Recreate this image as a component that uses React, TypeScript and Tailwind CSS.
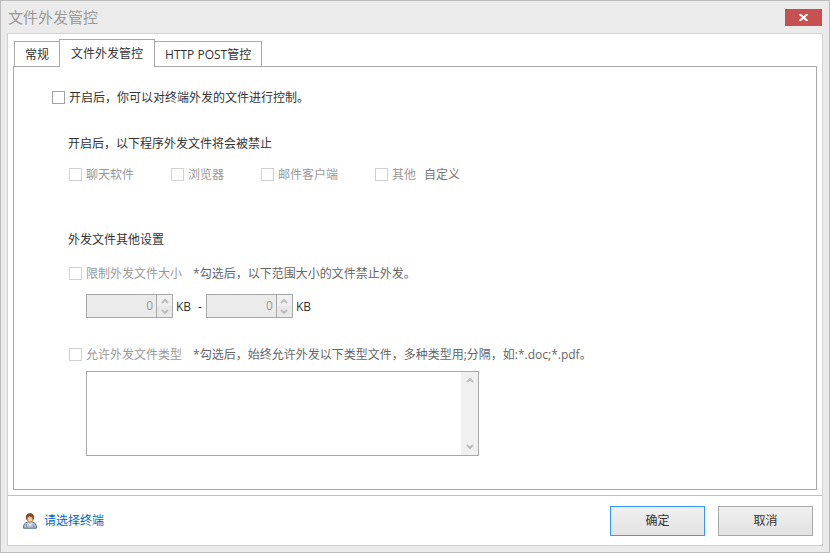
import { useState } from 'react'
import type { ReactNode } from 'react'

const tabs = ['常规', '文件外发管控', 'HTTP POST管控']
const programs = ['聊天软件', '浏览器', '邮件客户端']

function Arrow({ down = false }: { down?: boolean }) {
  return (
    <svg width="8" height="6" viewBox="0 0 8 6" fill="none" stroke="#bdbdbd" strokeWidth="2">
      <path d={down ? 'M1 1L4 4L7 1' : 'M1 5L4 2L7 5'} />
    </svg>
  )
}

function Check({ children, disabled = false }: { children: ReactNode; disabled?: boolean }) {
  return (
    <label className={`flex items-center gap-1 ${disabled ? 'text-[#999999]' : 'text-[#333333]'}`}>
      <input
        type="checkbox"
        disabled={disabled}
        className="size-[13px] shrink-0 appearance-none border border-[#a3a3a3] bg-white checked:bg-[#3399ff] disabled:border-[#d2d2d2]"
      />
      <span className="pt-px">{children}</span>
    </label>
  )
}

function SizeBox({ label }: { label: string }) {
  return (
    <div className="flex h-6 w-[87px] border border-[#a9a9a9] bg-[#ebebeb]">
      <input
        type="text"
        aria-label={label}
        defaultValue="0"
        disabled
        className="min-w-0 flex-1 bg-transparent pr-[3px] text-right text-[#999999]"
      />
      <div className="flex w-4 flex-col border-l border-[#a9a9a9]">
        <button type="button" disabled aria-label="增加" className="flex flex-1 items-center justify-center bg-[#f0f0f0]">
          <Arrow />
        </button>
        <button type="button" disabled aria-label="减少" className="flex flex-1 items-center justify-center bg-[#e8e8e8]">
          <Arrow down />
        </button>
      </div>
    </div>
  )
}

function UserIcon() {
  return (
    <svg width="14" height="16" viewBox="0 0 14 16">
      <path d="M0.6 15.2C0.3 11.6 1.5 9.8 4.4 9.2L9.6 9.2C12.5 9.8 13.7 11.6 13.4 15.2Z" fill="#b3c4d8" stroke="#566a84" strokeWidth="1" />
      <path d="M3.4 11.5V14.7M10.6 11.5V14.7" stroke="#7d92ad" strokeWidth="1" />
      <path d="M4.6 9.2L7 13.4L9.4 9.2Z" fill="#eef4fa" />
      <path d="M5.3 7.5H8.7V9.4L7 11L5.3 9.4Z" fill="#d9a06c" />
      <ellipse cx="7" cy="5.4" rx="3.2" ry="3.9" fill="#f3c79b" stroke="#8a5a35" strokeWidth="0.5" />
      <path d="M3.7 6.6C2.4 3 3.8 0.6 7 0.6C10.2 0.6 11.6 3 10.3 6.6L9.7 4C8.2 4 7 3.5 6.3 2.8C5.8 3.5 5 4 4.3 4.2Z" fill="#8a4a22" stroke="#5e3115" strokeWidth="0.6" />
    </svg>
  )
}

export default function App() {
  const [active, setActive] = useState(1)

  return (
    <div className="flex min-h-screen flex-col border border-[#bcbcbc] bg-[#ebebeb] px-[6px] pb-[6px] font-['Open_Sans','Noto_Sans_CJK_SC',sans-serif] text-xs leading-5 text-[#333333]">
      {/* Title bar */}
      <header className="flex h-8 items-center justify-between">
        <h1 className="pl-px text-[15px] text-[#999999]">文件外发管控</h1>
        <button type="button" aria-label="关闭" className="mr-px flex h-[17px] w-[37px] items-center justify-center bg-[#c75050]">
          <svg width="11" height="7" viewBox="0 0 11 7" stroke="#ffffff" strokeWidth="2">
            <path d="M1.5 0L9.5 7M9.5 0L1.5 7" />
          </svg>
        </button>
      </header>

      <div className="flex flex-1 flex-col border border-[#d2d2d2] bg-white">
        <main className="flex flex-1 flex-col px-[5px] pt-[5px] pb-[5px]">
          {/* Tabs */}
          <div role="tablist" className="z-10 -mb-px flex items-end pl-px">
            {tabs.map((tab, i) => (
              <button
                key={tab}
                type="button"
                role="tab"
                aria-selected={i === active}
                onClick={() => setActive(i)}
                className={
                  i === active
                    ? '-mx-px h-7 border border-b-0 border-[#a9a9a9] bg-white px-[11px]'
                    : 'h-[26px] border border-[#a9a9a9] bg-white px-[10px] pt-px'
                }
              >
                {tab}
              </button>
            ))}
          </div>

          <section role="tabpanel" className="flex-1 border border-[#a9a9a9] pt-5 pr-4 pb-8 pl-[38px]">
            <div className="flex">
              <Check>开启后，你可以对终端外发的文件进行控制。</Check>
            </div>

            <div className="pl-4">
              <h2 className="mt-[26px]">开启后，以下程序外发文件将会被禁止</h2>
              <div className="mt-[10px] flex gap-[37px] pl-px">
                {programs.map((name) => (
                  <Check key={name} disabled>{name}</Check>
                ))}
                <div className="flex gap-2">
                  <Check disabled>其他</Check>
                  <button type="button" className="pt-px text-[#777777]">自定义</button>
                </div>
              </div>

              <h2 className="mt-[45px]">外发文件其他设置</h2>
              <div className="mt-[13px] flex gap-[11px] pl-px">
                <Check disabled>限制外发文件大小</Check>
                <p className="pt-px text-[#666666]">*勾选后，以下范围大小的文件禁止外发。</p>
              </div>
              <div className="mt-[10px] flex items-center pl-[18px]">
                <SizeBox label="最小文件大小" />
                <span className="px-[3px] pt-px">KB</span>
                <span className="px-1 pt-px">-</span>
                <SizeBox label="最大文件大小" />
                <span className="px-[3px] pt-px">KB</span>
              </div>

              <div className="mt-[26px] flex gap-[11px] pl-px">
                <Check disabled>允许外发文件类型</Check>
                <p className="pt-px text-[#666666]">*勾选后，始终允许外发以下类型文件，多种类型用;分隔，如:*.doc;*.pdf。</p>
              </div>
              <div className="mt-[6px] ml-[18px] flex h-[85px] max-w-[393px] border border-[#a9a9a9]">
                <textarea aria-label="允许外发文件类型" disabled className="min-w-0 flex-1 resize-none px-1" />
                <div className="flex w-[17px] flex-col justify-between bg-[#f0f0f0]">
                  <button type="button" disabled aria-label="向上滚动" className="flex h-4 items-center justify-center">
                    <Arrow />
                  </button>
                  <button type="button" disabled aria-label="向下滚动" className="flex h-4 items-center justify-center">
                    <Arrow down />
                  </button>
                </div>
              </div>
            </div>
          </section>
        </main>

        {/* Footer */}
        <footer className="flex h-[50px] items-center justify-between border-t border-[#bfbfbf] pr-[9px] pl-[15px]">
          <a href="#terminals" className="flex items-center gap-[7px] text-[#0066cc]">
            <UserIcon />
            <span className="pt-px">请选择终端</span>
          </a>
          <div className="flex gap-[13px]">
            <button type="button" className="h-[30px] w-[95px] border border-[#3399ff] bg-linear-to-b from-[#f0f0f0] to-[#e3e3e3] pt-px">
              确定
            </button>
            <button type="button" className="h-[30px] w-[95px] border border-[#a9a9a9] bg-linear-to-b from-[#f0f0f0] to-[#e3e3e3] pt-px">
              取消
            </button>
          </div>
        </footer>
      </div>
    </div>
  )
}
